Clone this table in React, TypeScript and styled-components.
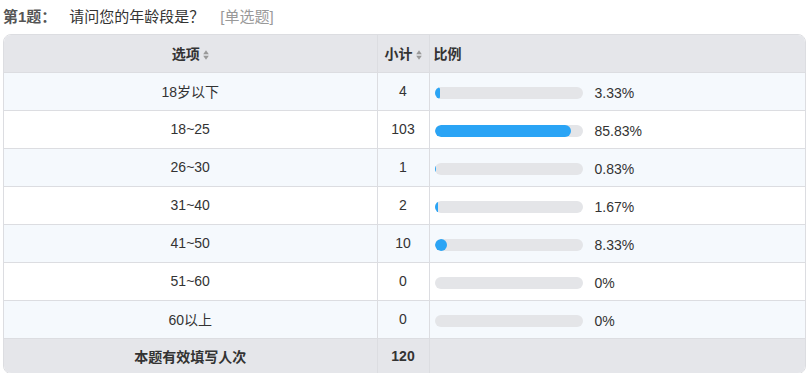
import React from "react";
import styled, { createGlobalStyle } from "styled-components";

const Global = createGlobalStyle`
  html, body { margin: 0; padding: 0; background: #fff; }
  body { font-family: "Liberation Sans", Arial, "Noto Sans CJK SC", sans-serif; color: #333; }
`;

const Page = styled.div`
  padding: 0 1px 0 3px;
`;

const Title = styled.div`
  height: 34px;
  display: flex;
  align-items: center;
  font-size: 15px;
  line-height: 20px;
  padding-bottom: 1px;
  box-sizing: border-box;
`;

const QNum = styled.span`
  font-weight: bold;
  color: #555;
  margin-right: 13px;
`;

const QText = styled.span`
  color: #333;
  margin-right: 16px;
`;

const QType = styled.span`
  color: #999;
`;

const Frame = styled.div`
  border: 1px solid #dcdde1;
  border-radius: 8px;
  overflow: hidden;
`;

const Table = styled.table`
  width: 100%;
  border-collapse: collapse;
  font-size: 14px;
  table-layout: fixed;
`;

const HeadRow = styled.tr`
  background: #e5e6ea;
  height: 37px;
`;

const Row = styled.tr<{ $odd: boolean }>`
  background: ${(p) => (p.$odd ? "#f5f9fd" : "#ffffff")};
  height: 38px;
`;

const FootRow = styled.tr`
  background: #e5e6ea;
  height: 35px;
`;

const Th = styled.th<{ $align?: string }>`
  font-weight: bold;
  color: #333;
  text-align: ${(p) => p.$align || "center"};
  padding: 0 4px;
  border-right: 1px solid #dcdde1;
  border-bottom: 1px solid #dcdde1;
  &:last-child { border-right: none; }
`;

const Td = styled.td<{ $bold?: boolean }>`
  text-align: center;
  padding: 0;
  font-weight: ${(p) => (p.$bold ? "bold" : "normal")};
  color: #333;
  border-right: 1px solid #dcdde1;
  border-bottom: 1px solid #dcdde1;
  &:last-child { border-right: none; }
`;

const FootTd = styled(Td)`
  border-bottom: none;
`;

const RatioCell = styled.td`
  padding: 0 0 0 5px;
  border-bottom: 1px solid #dcdde1;
`;

const RatioWrap = styled.div`
  display: flex;
  align-items: center;
  padding-top: 3px;
`;

const Track = styled.div`
  width: 148px;
  height: 12px;
  border-radius: 6px;
  background: #e4e5e8;
  overflow: hidden;
  flex: none;
`;

const Fill = styled.div`
  height: 100%;
  background: #2aa4f5;
  border-radius: 6px;
`;

const Pct = styled.span`
  margin-left: 12px;
  color: #333;
`;

const SortIcon = () => (
  <svg width="6" height="10" viewBox="0 0 6 10" style={{ marginLeft: 3, verticalAlign: "-1px" }}>
    <path d="M3 0.3 L5.8 4.2 H0.2 Z" fill="#999" />
    <path d="M3 9.7 L5.8 5.8 H0.2 Z" fill="#999" />
  </svg>
);

const rows = [
  { label: "18岁以下", n: 4, pct: "3.33%", fill: 5 },
  { label: "18~25", n: 103, pct: "85.83%", fill: 136 },
  { label: "26~30", n: 1, pct: "0.83%", fill: 1 },
  { label: "31~40", n: 2, pct: "1.67%", fill: 3 },
  { label: "41~50", n: 10, pct: "8.33%", fill: 12 },
  { label: "51~60", n: 0, pct: "0%", fill: 0 },
  { label: "60以上", n: 0, pct: "0%", fill: 0 },
];

export default function App() {
  return (
    <Page>
      <Global />
      <Title>
        <QNum>第1题：</QNum>
        <QText>请问您的年龄段是？</QText>
        <QType>[单选题]</QType>
      </Title>
      <Frame>
        <Table>
          <colgroup>
            <col style={{ width: 373 }} />
            <col style={{ width: 52 }} />
            <col />
          </colgroup>
          <thead>
            <HeadRow>
              <Th>
                选项
                <SortIcon />
              </Th>
              <Th>
                小计
                <SortIcon />
              </Th>
              <Th $align="left">比例</Th>
            </HeadRow>
          </thead>
          <tbody>
            {rows.map((r, i) => (
              <Row key={r.label} $odd={i % 2 === 0}>
                <Td>{r.label}</Td>
                <Td>{r.n}</Td>
                <RatioCell>
                  <RatioWrap>
                    <Track>
                      <Fill style={{ width: r.fill }} />
                    </Track>
                    <Pct>{r.pct}</Pct>
                  </RatioWrap>
                </RatioCell>
              </Row>
            ))}
            <FootRow>
              <FootTd $bold>本题有效填写人次</FootTd>
              <FootTd $bold>120</FootTd>
              <FootTd />
            </FootRow>
          </tbody>
        </Table>
      </Frame>
    </Page>
  );
}
